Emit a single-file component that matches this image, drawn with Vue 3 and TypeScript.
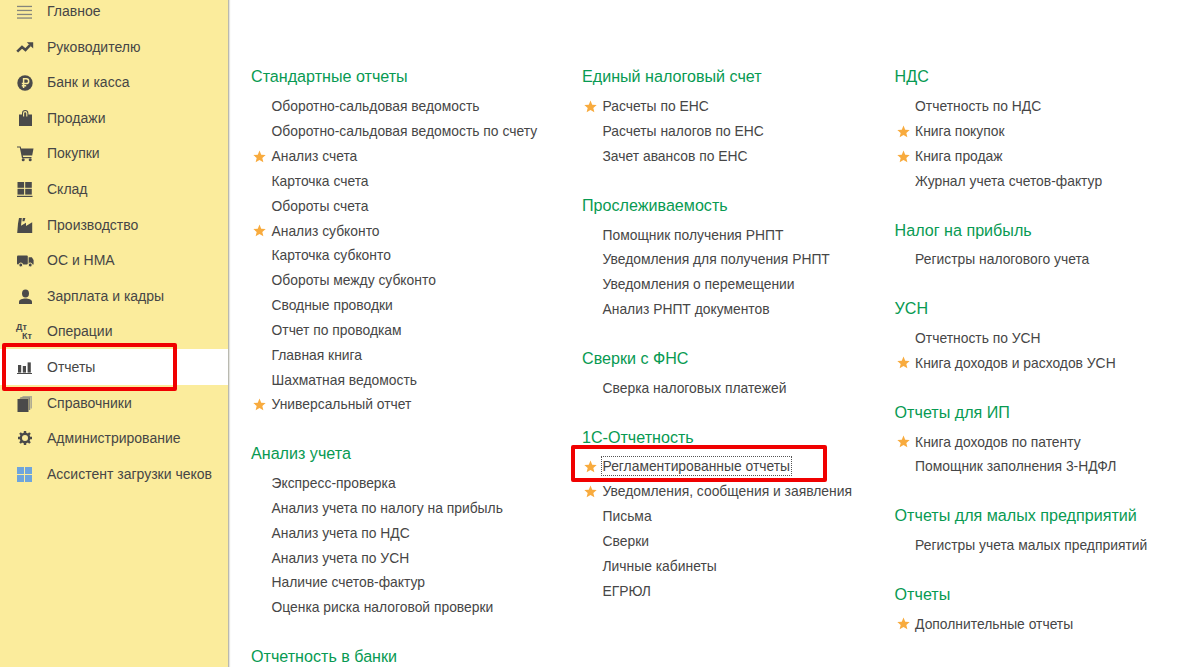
<script setup lang="ts">
interface Item { t: string; star?: boolean; focus?: boolean }
interface Section { title: string; items: Item[] }
const i = (t: string, star = false, focus = false): Item => ({ t, star, focus })

const nav = [
  { t: 'Главное', k: 'menu' }, { t: 'Руководителю', k: 'trend' }, { t: 'Банк и касса', k: 'rub' },
  { t: 'Продажи', k: 'bag' }, { t: 'Покупки', k: 'cart' }, { t: 'Склад', k: 'store' },
  { t: 'Производство', k: 'factory' }, { t: 'ОС и НМА', k: 'truck' }, { t: 'Зарплата и кадры', k: 'user' },
  { t: 'Операции', k: 'dtkt' }, { t: 'Отчеты', k: 'bars' }, { t: 'Справочники', k: 'books' },
  { t: 'Администрирование', k: 'gear' }, { t: 'Ассистент загрузки чеков', k: 'grid' },
]

const columns: Section[][] = [
  [
    { title: 'Стандартные отчеты', items: [
      i('Оборотно-сальдовая ведомость'), i('Оборотно-сальдовая ведомость по счету'), i('Анализ счета', true),
      i('Карточка счета'), i('Обороты счета'), i('Анализ субконто', true), i('Карточка субконто'),
      i('Обороты между субконто'), i('Сводные проводки'), i('Отчет по проводкам'), i('Главная книга'),
      i('Шахматная ведомость'), i('Универсальный отчет', true),
    ] },
    { title: 'Анализ учета', items: [
      i('Экспресс-проверка'), i('Анализ учета по налогу на прибыль'), i('Анализ учета по НДС'),
      i('Анализ учета по УСН'), i('Наличие счетов-фактур'), i('Оценка риска налоговой проверки'),
    ] },
    { title: 'Отчетность в банки', items: [] },
  ],
  [
    { title: 'Единый налоговый счет', items: [i('Расчеты по ЕНС', true), i('Расчеты налогов по ЕНС'), i('Зачет авансов по ЕНС')] },
    { title: 'Прослеживаемость', items: [
      i('Помощник получения РНПТ'), i('Уведомления для получения РНПТ'), i('Уведомления о перемещении'), i('Анализ РНПТ документов'),
    ] },
    { title: 'Сверки с ФНС', items: [i('Сверка налоговых платежей')] },
    { title: '1С-Отчетность', items: [
      i('Регламентированные отчеты', true, true), i('Уведомления, сообщения и заявления', true),
      i('Письма'), i('Сверки'), i('Личные кабинеты'), i('ЕГРЮЛ'),
    ] },
  ],
  [
    { title: 'НДС', items: [i('Отчетность по НДС'), i('Книга покупок', true), i('Книга продаж', true), i('Журнал учета счетов-фактур')] },
    { title: 'Налог на прибыль', items: [i('Регистры налогового учета')] },
    { title: 'УСН', items: [i('Отчетность по УСН'), i('Книга доходов и расходов УСН', true)] },
    { title: 'Отчеты для ИП', items: [i('Книга доходов по патенту', true), i('Помощник заполнения 3-НДФЛ')] },
    { title: 'Отчеты для малых предприятий', items: [i('Регистры учета малых предприятий')] },
    { title: 'Отчеты', items: [i('Дополнительные отчеты', true)] },
  ],
]
</script>

<template>
  <div class="page">
    <aside class="side">
      <ul class="nav">
        <li v-for="n in nav" :key="n.t" class="nav-row" :class="{ active: n.k === 'bars' }">
          <span class="ico">
            <svg v-if="n.k === 'menu'" width="18" height="18" viewBox="0 0 18 18" fill="#85857c"><rect x="1" y="3.8" width="15" height="1.3"/><rect x="1" y="7.8" width="15" height="1.3"/><rect x="1" y="11.8" width="15" height="1.3"/><rect x="1" y="15.4" width="15" height="1.3"/></svg>
            <svg v-else-if="n.k === 'trend'" width="18" height="18" viewBox="0 0 18 18"><path d="M1.2 13.6 L6 9 L9.5 12 L14 7.2" fill="none" stroke="#4a4a4a" stroke-width="2.6"/><path d="M10.8 4.2 H17.2 V10.4 Z" fill="#4a4a4a"/></svg>
            <svg v-else-if="n.k === 'rub'" width="18" height="18" viewBox="0 0 18 18"><circle cx="9" cy="10" r="7.7" fill="#4a4a4a"/><path d="M7.6 15 V5.8 H10.3 A2.4 2.4 0 0 1 10.3 10.6 H5.8 M5.8 12.7 H10.2" fill="none" stroke="#fbec9c" stroke-width="1.5"/></svg>
            <svg v-else-if="n.k === 'bag'" width="18" height="18" viewBox="0 0 18 18"><path d="M3 5.5 H6 V4.2 A3.2 3.2 0 0 1 12.4 4.2 V5.5 H16 V17 H3 Z" fill="#4a4a4a"/><path d="M7.6 7.6 V4.2 A1.6 1.6 0 0 1 10.8 4.2 V7.6" fill="none" stroke="#fbec9c" stroke-width="1.1"/></svg>
            <svg v-else-if="n.k === 'cart'" width="18" height="18" viewBox="0 0 18 18" fill="#4a4a4a"><path d="M1 2.5 H4.6 L5.2 4.6 H17.5 L16.2 11.5 H6.8 L7.2 13 H15.5 V14.2 H6 L3.8 3.6 H1 Z"/><circle cx="7.2" cy="15.8" r="1.5"/><circle cx="14.2" cy="15.8" r="1.5"/></svg>
            <svg v-else-if="n.k === 'store'" width="18" height="18" viewBox="0 0 18 18" fill="#4a4a4a"><rect x="1.5" y="2" width="6.6" height="5.8"/><rect x="9.2" y="2" width="6.6" height="5.8"/><rect x="1.5" y="8.8" width="6.6" height="5.8"/><rect x="9.2" y="8.8" width="6.6" height="5.8"/><rect x="1" y="15.8" width="15.5" height="1.2"/></svg>
            <svg v-else-if="n.k === 'factory'" width="18" height="18" viewBox="0 0 18 18" fill="#4a4a4a"><path d="M1.2 17 L2 7.5 L3 2 H5.8 L5 9.8 L10 6.8 V10 L16.2 6.2 V17 Z"/><path d="M6.8 2 H9.4 L8.4 5.2 H6.4 Z"/></svg>
            <svg v-else-if="n.k === 'truck'" width="18" height="18" viewBox="0 0 18 18" fill="#4a4a4a"><rect x="1" y="4.5" width="10.8" height="9" rx="1"/><path d="M12.6 6.2 H15.8 L17.6 9 V13.5 H12.6 Z"/><circle cx="4.8" cy="14" r="2" stroke="#fbec9c"/><circle cx="14.2" cy="14" r="2" stroke="#fbec9c"/></svg>
            <svg v-else-if="n.k === 'user'" width="18" height="18" viewBox="0 0 18 18" fill="#4a4a4a"><ellipse cx="9.5" cy="6.6" rx="3.5" ry="4"/><path d="M3 17 V15 C3 12.6 6.6 11.6 9.5 11.6 C12.4 11.6 16 12.6 16 15 V17 Z"/></svg>
            <span v-else-if="n.k === 'dtkt'" class="dtkt"><b>Дт</b><b class="kt">Кт</b></span>
            <svg v-else-if="n.k === 'bars'" width="18" height="18" viewBox="0 0 18 18" fill="#4a4a4a"><rect x="2" y="7" width="3.2" height="7.6"/><rect x="6.8" y="8" width="3.2" height="6.6"/><rect x="11.6" y="4.4" width="3.2" height="10.2"/><rect x="1" y="15" width="15" height="1"/></svg>
            <svg v-else-if="n.k === 'books'" width="18" height="18" viewBox="0 0 18 18"><path d="M7 2 H16 V14.5 H14.5 V3.4 H5.5 Z" fill="#b0ac94"/><path d="M4.5 3.2 H14.2 V16 H12.8 V4.8 H3.5 Z" fill="#85857c"/><rect x="1.5" y="5" width="11" height="13" fill="#4a4a4a"/></svg>
            <svg v-else-if="n.k === 'gear'" width="18" height="18" viewBox="0 0 18 18"><circle cx="9" cy="9" r="4.2" fill="none" stroke="#4a4a4a" stroke-width="2.4"/><g stroke="#4a4a4a" stroke-width="2.4"><path d="M9 2 V4.5 M9 13.5 V16 M2 9 H4.5 M13.5 9 H16 M4 4 L5.8 5.8 M12.2 12.2 L14 14 M14 4 L12.2 5.8 M5.8 12.2 L4 14"/></g></svg>
            <svg v-else-if="n.k === 'grid'" width="18" height="18" viewBox="0 0 18 18" fill="#6fa5dc"><rect x="1" y="2" width="7" height="7"/><rect x="9" y="2" width="7" height="7"/><rect x="1" y="10" width="7" height="7"/><rect x="9" y="10" width="7" height="7"/></svg>
          </span>
          <span class="nav-text">{{ n.t }}</span>
        </li>
      </ul>
    </aside>

    <main class="main">
      <div v-for="(col, c) in columns" :key="c" class="col" :class="`col${c}`">
        <section v-for="s in col" :key="s.title" class="sec">
          <h3 class="head">{{ s.title }}</h3>
          <div v-for="it in s.items" :key="it.t" class="item">
            <span class="star"><svg v-if="it.star" width="13" height="13" viewBox="0 0 24 24" fill="#f8ab3e"><path d="M12 1 L15.2 8.6 L23.4 9.3 L17.2 14.7 L19.1 22.8 L12 18.5 L4.9 22.8 L6.8 14.7 L.6 9.3 L8.8 8.6 Z"/></svg></span>
            <span class="label" :class="{ focus: it.focus }">{{ it.t }}</span>
          </div>
        </section>
      </div>
    </main>

    <div class="mark mark-nav"></div>
    <div class="mark mark-item"></div>
  </div>
</template>

<style>
html, body { margin: 0; background: #fff; }
</style>

<style scoped>
.page {
  position: relative;
  display: flex;
  width: 1200px;
  height: 667px;
  overflow: hidden;
  font-family: "Liberation Sans", Arial, sans-serif;
  background: #fff;
}
.side {
  flex: 0 0 228px;
  background: #fbec9c;
  border-right: 1px solid #b9b9b0;
  box-shadow: 1px 0 1px #e4e4e0;
}
.nav { list-style: none; margin: -6.7px 0 0; padding: 0; }
.nav-row {
  display: flex;
  align-items: center;
  height: 35.6px;
  padding-left: 16px;
  color: #464646;
  font-size: 14px;
}
.nav-row.active { background: #fff; }
.ico { flex: 0 0 18px; height: 18px; display: flex; align-items: center; justify-content: center; }
.nav-text { margin-left: 13px; white-space: nowrap; }
.dtkt { display: flex; flex-direction: column; width: 18px; font-size: 9px; line-height: 9px; margin-top: 2px; }
.dtkt b { font-weight: 700; color: #4a4a4a; }
.dtkt .kt { margin-left: 6px; }
.main { flex: 1; display: flex; padding-top: 64.4px; align-items: flex-start; }
.col { display: flex; flex-direction: column; }
.col0 { margin-left: 22px; width: 331px; }
.col1 { width: 312.6px; }
.sec { margin-bottom: 24.3px; }
.head {
  margin: 0;
  height: 25px;
  line-height: 25px;
  font-size: 16.13px;
  font-weight: 400;
  color: #089a52;
  white-space: nowrap;
}
.item {
  display: flex;
  align-items: center;
  height: 24.85px;
  font-size: 13.87px;
  color: #464646;
  white-space: nowrap;
}
.head + .item { margin-top: 4.5px; }
.star { flex: 0 0 18.5px; height: 13px; display: flex; align-items: center; padding-left: 2px; }
.label { padding: 0 1px; margin-left: -1px; }
.label.focus { outline: 1px dotted #555; line-height: 18px; }
.mark { position: absolute; border: 4px solid #f00000; border-radius: 2px; box-sizing: border-box; pointer-events: none; }
.mark-nav { left: 2px; top: 343px; width: 175px; height: 48px; }
.mark-item { left: 571px; top: 445px; width: 256px; height: 37px; }
</style>
